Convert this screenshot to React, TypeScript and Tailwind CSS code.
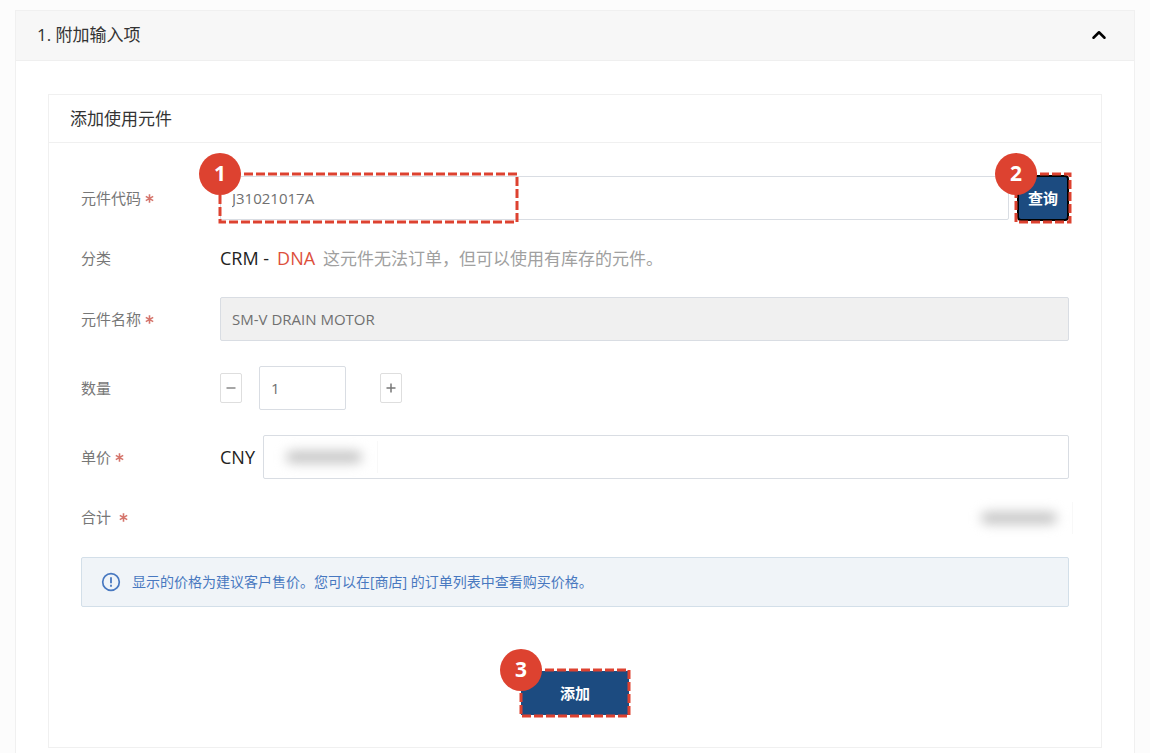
import { useState } from 'react';
import type { ReactNode } from 'react';
import { ChevronUp } from 'lucide-react';

const inputBase =
  'h-11 min-w-0 rounded-xs border border-[#d9dde3] px-[11px] text-[15px] text-[#707070] outline-none';

function Star() {
  return (
    <svg className="size-[9px] shrink-0 text-[#d5756c]" viewBox="0 0 9 9" aria-hidden="true">
      <path d="M4.5 0.3v8.4M0.8 2.4l7.4 4.2M8.2 2.4l-7.4 4.2" stroke="currentColor" strokeWidth="1.6" fill="none" />
    </svg>
  );
}

function Row({
  label,
  htmlFor,
  required,
  wide,
  children,
}: {
  label: string;
  htmlFor?: string;
  required?: boolean;
  wide?: boolean;
  children: ReactNode;
}) {
  const text = (
    <>
      {label}
      {required && <Star />}
    </>
  );
  const cls = `flex w-[139px] shrink-0 items-center text-[15px] text-[#777] ${wide ? 'gap-2' : 'gap-1'}`;
  return (
    <div className="flex min-h-[27px] items-center">
      {htmlFor ? (
        <label htmlFor={htmlFor} className={cls}>
          {text}
        </label>
      ) : (
        <span className={cls}>{text}</span>
      )}
      {children}
    </div>
  );
}

function Callout({ n, className }: { n: number; className: string }) {
  return (
    <div className={`pointer-events-none absolute ${className}`}>
      <svg className="block h-full w-full overflow-visible" aria-hidden="true">
        <rect width="100%" height="100%" fill="none" stroke="#dd4230" strokeWidth="3" strokeDasharray="9 3" />
      </svg>
      <span className="absolute -top-[21px] -left-[21px] flex size-[42px] items-center justify-center rounded-full bg-[#dd4230] text-[21px] font-bold text-white">
        {n}
      </span>
    </div>
  );
}

function MaskedValue() {
  return (
    <span className="pointer-events-none flex h-8 w-[100px] items-center border-r border-[#f8f8f8] pl-2">
      <span className="h-3 w-[76px] rounded-full bg-[#c4c4c4] blur-[6px]" />
    </span>
  );
}

export default function App() {
  const [open, setOpen] = useState(true);
  const [code, setCode] = useState('J31021017A');
  const [qty, setQty] = useState(1);
  const [price, setPrice] = useState('');

  return (
    <div className="min-h-screen bg-[#fcfcfc] px-[15px] pt-[10px] font-['Open_Sans','Noto_Sans_CJK_SC',sans-serif] text-[#333]">
      <section className="border border-[#f0f0f0] bg-white">
        <h2>
          <button
            type="button"
            aria-expanded={open}
            onClick={() => setOpen(!open)}
            className="flex h-[50px] w-full items-center justify-between border-b border-[#efefef] bg-[#f7f7f7] pr-6 pb-px pl-[21px] text-[17px]"
          >
            1. 附加输入项
            <ChevronUp className={`size-[22px] text-black ${open ? '' : 'rotate-180'}`} strokeWidth={2.75} />
          </button>
        </h2>
        {open && (
          <div className="px-8 pt-[33px] pb-8">
            <form className="border border-[#f0f0f0]" onSubmit={(e) => e.preventDefault()}>
              <h3 className="flex h-[48px] items-center border-b border-[#f0f0f0] px-[21px] text-[17px]">添加使用元件</h3>
              <div className="px-8 pt-[33px] pb-8">
                <div className="flex flex-col gap-[25px]">
                  <Row label="元件代码" htmlFor="code" required>
                    <div className="flex flex-1 items-center gap-2">
                      <div className="relative flex flex-1">
                        <input
                          id="code"
                          value={code}
                          onChange={(e) => setCode(e.target.value)}
                          className={`${inputBase} w-full bg-white`}
                        />
                        <Callout n={1} className="-top-[2px] left-0 h-12 w-[297px]" />
                      </div>
                      <div className="relative -my-px">
                        <button
                          type="button"
                          className="block h-[46px] w-[52px] rounded-sm border-2 border-black bg-[#1c4b80] text-[15px] font-bold text-white"
                        >
                          查询
                        </button>
                        <Callout n={2} className="-inset-px" />
                      </div>
                    </div>
                  </Row>
                  <Row label="分类">
                    <p className="flex items-center gap-2 text-[17px] leading-[27px] text-[#a0a0a0]">
                      <span className="text-lg leading-[27px] text-[#222]">CRM -</span>
                      <span className="text-lg leading-[27px] text-[#dd4f3c]">DNA</span>
                      这元件无法订单，但可以使用有库存的元件。
                    </p>
                  </Row>
                  <Row label="元件名称" htmlFor="name" required>
                    <input id="name" readOnly value="SM-V DRAIN MOTOR" className={`${inputBase} flex-1 bg-[#f0f0f0]`} />
                  </Row>
                  <Row label="数量" htmlFor="qty">
                    <div className="flex items-center">
                      <button
                        type="button"
                        aria-label="减少"
                        onClick={() => setQty(Math.max(1, qty - 1))}
                        className="flex h-[30px] w-[22px] items-center justify-center rounded-xs border border-[#dedede] text-[#888]"
                      >
                        <svg className="size-[10px]" viewBox="0 0 10 10">
                          <path d="M0.5 5h9" stroke="currentColor" strokeWidth="1.5" />
                        </svg>
                      </button>
                      <input
                        id="qty"
                        value={qty}
                        onChange={(e) => setQty(Number(e.target.value) || 1)}
                        className={`${inputBase} mr-[34px] ml-[17px] w-[87px] bg-white`}
                      />
                      <button
                        type="button"
                        aria-label="增加"
                        onClick={() => setQty(qty + 1)}
                        className="flex h-[30px] w-[22px] items-center justify-center rounded-xs border border-[#dedede] text-[#777]"
                      >
                        <svg className="size-[10px]" viewBox="0 0 10 10">
                          <path d="M0.5 5h9M5 0.5v9" stroke="currentColor" strokeWidth="1.5" />
                        </svg>
                      </button>
                    </div>
                  </Row>
                  <Row label="单价" htmlFor="price" required>
                    <div className="flex flex-1 items-center gap-2">
                      <span className="text-lg text-[#222]">CNY</span>
                      <div className="relative flex flex-1">
                        <input
                          id="price"
                          value={price}
                          onChange={(e) => setPrice(e.target.value)}
                          className={`${inputBase} w-full bg-white`}
                        />
                        {price === '' && (
                          <div className="pointer-events-none absolute inset-y-0 left-[15px] flex items-center">
                            <MaskedValue />
                          </div>
                        )}
                      </div>
                    </div>
                  </Row>
                  <Row label="合计" required wide>
                    <div className="-my-1 -mr-1 ml-auto">
                      <MaskedValue />
                    </div>
                  </Row>
                </div>
                <p className="mt-[26px] flex h-[50px] items-center gap-[11px] rounded-xs border border-[#d3dfe9] bg-[#f0f4f8] px-[19px] text-sm text-[#4878c0]">
                  <svg className="size-5 shrink-0" viewBox="0 0 20 20" fill="none" stroke="currentColor" aria-hidden="true">
                    <circle cx="10" cy="10" r="8.3" strokeWidth="1.7" />
                    <path d="M10 5.2v6M10 12.8v2" strokeWidth="1.8" />
                  </svg>
                  显示的价格为建议客户售价。您可以在[商店] 的订单列表中查看购买价格。
                </p>
                <div className="mt-16 flex justify-center">
                  <div className="relative">
                    <button type="submit" className="block h-11 w-[108px] bg-[#1c4b80] text-[15px] font-bold text-white">
                      添加
                    </button>
                    <Callout n={3} className="inset-x-0 -inset-y-px" />
                  </div>
                </div>
              </div>
            </form>
          </div>
        )}
      </section>
    </div>
  );
}
